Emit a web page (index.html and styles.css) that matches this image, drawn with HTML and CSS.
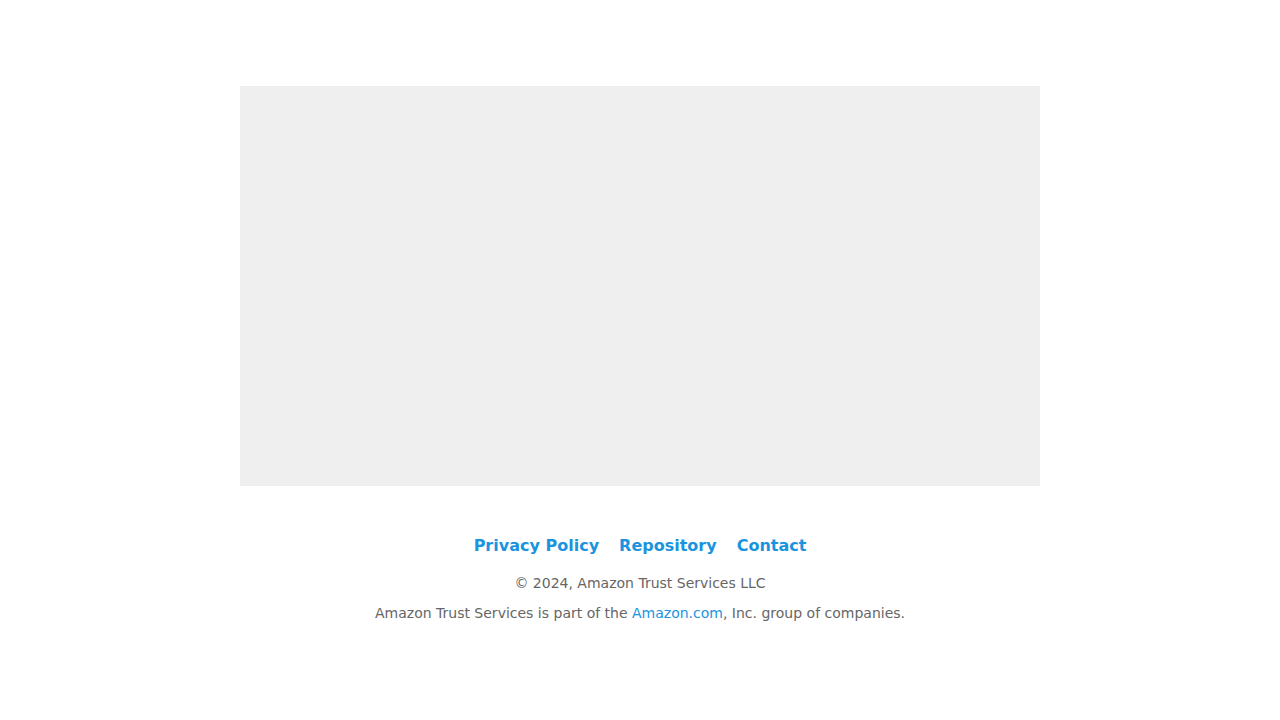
FILE: index.html
```html
<!DOCTYPE html>
<html lang="en">
<head>
<meta charset="utf-8">
<title>Amazon Trust Services</title>
<link rel="stylesheet" href="styles.css">
</head>
<body>
<main class="page">
  <div class="hero"></div>
  <footer class="footer">
    <nav class="footer-links">
      <a href="#">Privacy Policy</a>
      <a href="#">Repository</a>
      <a href="#">Contact</a>
    </nav>
    <p class="copy">© 2024, Amazon Trust Services LLC</p>
    <p class="copy">Amazon Trust Services is part of the <a href="#">Amazon.com</a>, Inc. group of companies.</p>
  </footer>
</main>
</body>
</html>
```
FILE: styles.css
```css
html, body {
  margin: 0;
  padding: 0;
  background: #ffffff;
  font-family: "DejaVu Sans", Verdana, sans-serif;
}
.page {
  display: flex;
  flex-direction: column;
  align-items: center;
  padding-top: 86px;
}
.hero {
  width: 800px;
  height: 400px;
  background: #efefef;
}
.footer {
  margin-top: 48px;
  display: flex;
  flex-direction: column;
  align-items: center;
}
.footer-links {
  display: flex;
  gap: 20px;
  height: 24px;
  line-height: 24px;
}
.footer-links a {
  font-size: 16px;
  font-weight: bold;
  color: #1a94de;
  text-decoration: none;
}
.copy {
  margin: 0;
  font-size: 14px;
  line-height: 20px;
  color: #666666;
}
.footer-links + .copy {
  margin-top: 15px;
}
.copy + .copy {
  margin-top: 10px;
}
.copy a {
  color: #1a94de;
  text-decoration: none;
}
```
